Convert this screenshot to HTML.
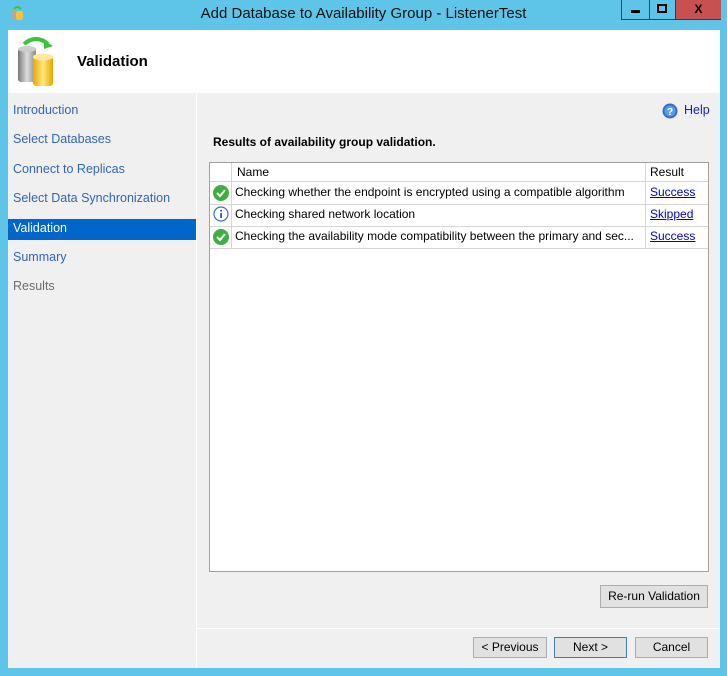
<!DOCTYPE html>
<html><head><style>
body{margin:0;width:727px;height:676px;background:#5ec5e8;position:relative;overflow:hidden;font-family:"Segoe UI","Liberation Sans",sans-serif;font-size:12px;}
.a{position:absolute;}
.btn{position:absolute;background:#e1e1e1;border:1px solid #adadad;text-align:center;line-height:19px;font-size:12px;color:#000;box-sizing:border-box;}
.nav{position:absolute;left:13px;color:#3366b0;font-size:12.5px;}
.row{position:absolute;left:210px;width:498px;height:22px;border-bottom:1px solid #d5d5d5;}
.row span{position:absolute;top:3px;}
.lnk{color:#0000cc;text-decoration:underline;}
</style></head><body>
<!-- title -->
<div class="a" style="left:10px;top:5px;width:14px;height:16px;">
<svg width="14" height="16"><rect x="1" y="5" width="6" height="9" rx="2" fill="#aaa"/><rect x="6" y="6" width="7" height="9" rx="2" fill="#f5c33b"/><path d="M4 4 Q7 0 11 4" stroke="#3c3" stroke-width="2" fill="none"/></svg></div>
<div class="a" style="left:0;width:727px;top:5px;text-align:center;font-size:15px;color:#111;">Add Database to Availability Group - ListenerTest</div>
<div class="a" style="left:621px;top:0;width:100px;height:20px;border:1px solid #3a3a3a;border-top:none;box-sizing:border-box;">
<div class="a" style="left:0;top:0;width:27px;height:19px;border-right:1px solid #3a3a3a;"><div class="a" style="left:9px;top:10px;width:9px;height:3px;background:#000"></div></div>
<div class="a" style="left:28px;top:0;width:25px;height:19px;border-right:1px solid #3a3a3a;"><div class="a" style="left:7px;top:4px;width:6px;height:5px;border:2px solid #000"></div></div>
<div class="a" style="left:54px;top:0;width:45px;height:19px;background:#c75050;text-align:center;font-weight:bold;font-size:12px;line-height:19px;">X</div>
</div>
<!-- window content -->
<div class="a" style="left:8px;top:30px;width:712px;height:638px;background:#f0f0f0;"></div>
<div class="a" style="left:8px;top:30px;width:712px;height:63px;background:#fff;"></div>
<svg class="a" style="left:16px;top:36px" width="44" height="52">
<defs><linearGradient id="g" x1="0" x2="1"><stop offset="0" stop-color="#777"/><stop offset=".5" stop-color="#ddd"/><stop offset="1" stop-color="#888"/></linearGradient>
<linearGradient id="y" x1="0" x2="1"><stop offset="0" stop-color="#e9a800"/><stop offset=".5" stop-color="#ffe680"/><stop offset="1" stop-color="#e8a500"/></linearGradient></defs>
<rect x="2" y="12" width="18" height="34" rx="3" fill="url(#g)"/><ellipse cx="11" cy="13" rx="9" ry="3" fill="#ccc"/>
<rect x="17" y="20" width="20" height="30" rx="3" fill="url(#y)"/><ellipse cx="27" cy="21" rx="10" ry="3.5" fill="#ffe9a0"/>
<path d="M8 8 Q20 -2 32 8" stroke="#3bc43b" stroke-width="4" fill="none"/><path d="M28 4 L37 10 L28 13Z" fill="#3bc43b"/>
</svg>
<div class="a" style="left:77px;top:53px;font-size:15px;font-weight:bold;color:#000;">Validation</div>
<!-- sidebar -->
<div class="a" style="left:196px;top:93px;width:1px;height:575px;background:#fff;"></div>
<div class="nav" style="top:103px">Introduction</div>
<div class="nav" style="top:132px">Select Databases</div>
<div class="nav" style="top:162px">Connect to Replicas</div>
<div class="nav" style="top:191px">Select Data Synchronization</div>
<div class="a" style="left:8px;top:219px;width:188px;height:21px;background:#0066cc;"></div>
<div class="nav" style="top:221px;color:#fff">Validation</div>
<div class="nav" style="top:250px">Summary</div>
<div class="nav" style="top:279px;color:#6d6d6d">Results</div>
<!-- help -->
<svg class="a" style="left:662px;top:103px" width="16" height="16"><circle cx="8" cy="8" r="7.5" fill="#2f6fc9"/><circle cx="8" cy="8" r="5.5" fill="#5a9be6"/><text x="8" y="12" font-size="10" font-weight="bold" text-anchor="middle" fill="#fff" font-family="Liberation Sans">?</text></svg>
<div class="a" style="left:684px;top:103px;color:#1a1acc;font-size:12.5px;">Help</div>
<div class="a" style="left:213px;top:135px;font-weight:bold;font-size:12px;color:#000;">Results of availability group validation.</div>
<!-- table -->
<div class="a" style="left:209px;top:162px;width:500px;height:410px;background:#fff;border:1px solid #a0a0a0;box-sizing:border-box;"></div>
<div class="row" style="top:163px;height:18px;"><span style="left:27px;top:2px">Name</span><span style="left:440px;top:2px">Result</span></div>
<div class="row" style="top:182px"><span style="left:25px">Checking whether the endpoint is encrypted using a compatible algorithm</span><span class="lnk" style="left:440px">Success</span></div>
<div class="row" style="top:204px"><span style="left:25px">Checking shared network location</span><span class="lnk" style="left:440px">Skipped</span></div>
<div class="row" style="top:226px"><span style="left:25px">Checking the availability mode compatibility between the primary and sec...</span><span class="lnk" style="left:440px">Success</span></div>
<div class="a" style="left:231px;top:163px;width:1px;height:85px;background:#d5d5d5"></div>
<div class="a" style="left:645px;top:163px;width:1px;height:85px;background:#d5d5d5"></div>
<svg class="a" style="left:212px;top:184px" width="18" height="18"><circle cx="9" cy="9" r="8" fill="#3fae3f"/><path d="M5 9 L8 12 L13 6" stroke="#fff" stroke-width="2" fill="none"/></svg>
<svg class="a" style="left:213px;top:206px" width="16" height="16"><circle cx="8" cy="8" r="7" fill="#fff" stroke="#3a6fc0" stroke-width="1.2"/><rect x="7.2" y="7" width="1.8" height="5" fill="#2a5aa8"/><circle cx="8.1" cy="4.8" r="1" fill="#2a5aa8"/></svg>
<svg class="a" style="left:212px;top:228px" width="18" height="18"><circle cx="9" cy="9" r="8" fill="#3fae3f"/><path d="M5 9 L8 12 L13 6" stroke="#fff" stroke-width="2" fill="none"/></svg>
<!-- buttons -->
<div class="btn" style="left:600px;top:585px;width:108px;height:23px;line-height:21px;">Re-run Validation</div>
<div class="a" style="left:197px;top:628px;width:523px;height:1px;background:#fff"></div>
<div class="btn" style="left:473px;top:637px;width:74px;height:21px;">&lt; Previous</div>
<div class="btn" style="left:554px;top:637px;width:73px;height:21px;border-color:#3c7fb1;">Next &gt;</div>
<div class="btn" style="left:635px;top:637px;width:73px;height:21px;">Cancel</div>
</body></html>
